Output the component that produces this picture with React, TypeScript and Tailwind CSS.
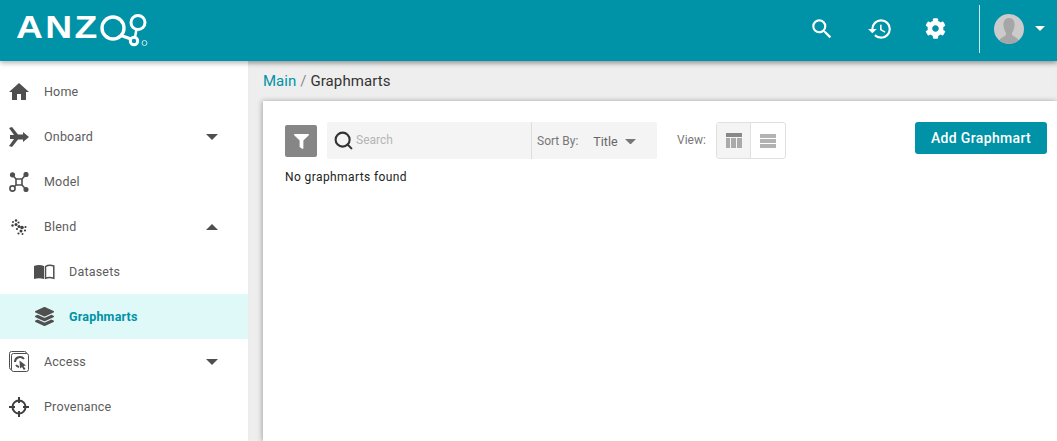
import React from 'react';
import { Search } from 'lucide-react';
import { FaCog, FaFilter, FaLayerGroup } from 'react-icons/fa';
import { MdHistory, MdHome, MdSearch } from 'react-icons/md';

const Caret = ({ up = false, width = 12, className = '' }: { up?: boolean; width?: number; className?: string }) => (
  <svg width={width} height={width / 2} viewBox="0 0 12 6" className={className}>
    <path d={up ? 'M0 6 L6 0 L12 6 Z' : 'M0 0 L12 0 L6 6 Z'} fill="currentColor" />
  </svg>
);

const OnboardIcon = () => (
  <svg width="20" height="20" viewBox="0 0 20 20" fill="#4f4f4f" className="shrink-0">
    <path d="M0 1 L3 0 L9 7.5 L14 7.5 L14 5 L20 10 L14 15 L14 12.5 L9 12.5 L3 20 L0 19 L5 12 L1 12 L1 8 L5 8 Z" />
  </svg>
);

const ModelIcon = () => (
  <svg width="20" height="20" viewBox="0 0 20 20" fill="none" stroke="#4f4f4f" strokeWidth="1.6" className="shrink-0">
    <path d="M7 7 H13 V13 H7 Z" />
    <path d="M7 7 L3.5 3 M13 7 L17 2.5 M13 13 L17 17.5 M7 13 L5 15" />
    <circle cx="3.5" cy="2.8" r="1.8" fill="#4f4f4f" />
    <circle cx="17" cy="2.5" r="1.8" fill="#4f4f4f" />
    <circle cx="17" cy="17.5" r="1.8" fill="#4f4f4f" />
    <circle cx="3.5" cy="16.5" r="2.6" />
  </svg>
);

const BlendIcon = () => (
  <svg width="16" height="16" viewBox="0 0 16 16" fill="#3f3f3f" className="shrink-0">
    <circle cx="5" cy="1.5" r="1.2" />
    <circle cx="2" cy="3" r="1" />
    <circle cx="7.5" cy="3.5" r="1.1" />
    <circle cx="1.5" cy="6.5" r="1.2" />
    <circle cx="5" cy="5.5" r="1.5" />
    <circle cx="8" cy="7.5" r="1.5" />
    <circle cx="11" cy="8.5" r="1.8" />
    <circle cx="14.5" cy="8" r="1.1" />
    <circle cx="6" cy="10" r="1.1" />
    <circle cx="10" cy="12" r="1.5" />
    <circle cx="14" cy="11.5" r="1.1" />
    <circle cx="7.5" cy="14.5" r="1.1" />
    <circle cx="11.5" cy="15" r="1" />
  </svg>
);

const BookIcon = () => (
  <svg width="21" height="16" viewBox="0 0 21 16" className="shrink-0">
    <path d="M0 2 C3 0.5 7 0.5 10 2 V15 C7 14 3 14 0 15 Z" fill="#4f4f4f" />
    <path d="M11.5 2.6 C14 1 17 1 19.8 2 V14.2 C17 13.4 14 13.4 11.5 14.2 Z" fill="#fff" stroke="#4f4f4f" strokeWidth="1.5" />
  </svg>
);

const AccessIcon = () => (
  <svg width="20" height="21" viewBox="0 0 20 21" fill="none" stroke="#4f4f4f" className="shrink-0">
    <rect x="0.5" y="0.5" width="17" height="18" rx="2" strokeWidth="1" />
    <rect x="2.5" y="2.5" width="17" height="18" rx="2" fill="#fff" strokeWidth="1" />
    <path d="M6 11 A5 5 0 0 1 15 8" strokeWidth="2" />
    <path d="M7 14 A5 5 0 0 0 10 16" strokeWidth="2" />
    <path d="M10.5 9.5 L17 14.5 L14.5 15 L16.5 18 L14.8 19 L13 16 L11 17.5 Z" fill="#4f4f4f" stroke="none" />
  </svg>
);

const ProvenanceIcon = () => (
  <svg width="20" height="20" viewBox="0 0 20 20" fill="none" stroke="#3f3f3f" strokeWidth="2" className="shrink-0">
    <circle cx="10" cy="10" r="6.5" />
    <path d="M10 0 V6 M10 14 V20 M0 10 H6 M14 10 H20" />
  </svg>
);

const NavRow = ({
  icon,
  label,
  caret,
  sub,
  active,
}: {
  icon: React.ReactNode;
  label: string;
  caret?: 'up' | 'down';
  sub?: boolean;
  active?: boolean;
}) => (
  <div className={`flex h-[45px] items-center pr-[30px] ${sub ? 'pl-[34px]' : 'pl-[9px]'} ${active ? 'bg-[#dff8f8]' : ''}`}>
    <div className="flex w-[20px] justify-center">{icon}</div>
    <span
      className={`ml-[15px] mt-[2px] text-[12.5px] tracking-[0.2px] ${active ? 'font-bold text-[#0092a6]' : 'text-[#5c5c5c]'}`}
    >
      {label}
    </span>
    {caret && <Caret up={caret === 'up'} className="ml-auto text-[#4f4f4f]" />}
  </div>
);

export default function App() {
  return (
    <div className="flex h-[441px] w-[1057px] flex-col overflow-hidden bg-white font-['Roboto',sans-serif]">
      <header className="relative z-10 flex h-[61px] shrink-0 items-center bg-[#0092a6] pl-[16px] pr-[12px] shadow-[0_2px_5px_rgba(0,0,0,0.3)]">
        <div className="flex items-center">
          <span className="mb-[6px] w-[84px] origin-left font-['Liberation_Sans',sans-serif] text-[31px] leading-none font-bold tracking-[2px] text-white [transform:scaleX(1.2)]">
            ANZ
          </span>
          <svg width="50" height="34" viewBox="0 0 50 34" className="mt-[1px]" fill="none" stroke="#fff" strokeWidth="3.4">
            <circle cx="13" cy="14" r="11" />
            <path d="M21 21.5 L31 25" />
            <path d="M36.5 15 L35 23.5" strokeWidth="2.5" />
            <circle cx="38" cy="8.5" r="7" strokeWidth="3" />
            <circle cx="34" cy="27" r="3.7" strokeWidth="3" />
            <circle cx="44.5" cy="29" r="2.5" strokeWidth="1" stroke="#cfe9ed" />
          </svg>
        </div>
        <div className="ml-auto flex items-center pb-[4px]">
          <MdSearch className="mr-[32px] text-white" size={26} />
          <MdHistory className="mr-[32px] text-white" size={26} />
          <FaCog className="mr-[33px] text-white" size={21} />
          <div className="h-[48px] w-px bg-[#cfe9ed]" />
          <div className="relative ml-[14px] h-[30px] w-[30px] overflow-hidden rounded-full bg-[#cbcbcb]">
            <svg width="30" height="30" viewBox="0 0 30 30" fill="#a6a6a6">
              <path d="M15 4 C19 4 21 7 20.5 12 C20 16 18.5 18 18 19 L18 21 L24 25 L24 30 L6 30 L6 25 L12 21 L12 19 C11.5 18 10 16 9.5 12 C9 7 11 4 15 4 Z" />
            </svg>
          </div>
          <Caret width={10} className="ml-[11px] text-white" />
        </div>
      </header>

      <div className="flex min-h-0 flex-1">
        <aside className="w-[248px] shrink-0 bg-white pt-[8px]">
          <NavRow icon={<MdHome className="shrink-0 text-[#4f4f4f]" size={24} />} label="Home" />
          <NavRow icon={<OnboardIcon />} label="Onboard" caret="down" />
          <NavRow icon={<ModelIcon />} label="Model" />
          <NavRow icon={<BlendIcon />} label="Blend" caret="up" />
          <NavRow icon={<BookIcon />} label="Datasets" sub />
          <NavRow icon={<FaLayerGroup className="shrink-0 text-[#4f4f4f]" size={19} />} label="Graphmarts" sub active />
          <NavRow icon={<AccessIcon />} label="Access" caret="down" />
          <NavRow icon={<ProvenanceIcon />} label="Provenance" />
        </aside>

        <main className="flex min-w-0 flex-1 flex-col bg-[#eeeeee] shadow-[inset_0_5px_5px_-3px_rgba(0,0,0,0.12)]">
          <div className="flex h-[40px] shrink-0 items-center pl-[15px] text-[15px] text-[#333]">
            <span className="text-[#0092a6]">Main</span>
            <span className="mx-[4px] text-[#8a8a8a]">/</span>
            <span className="tracking-[0.1px]">Graphmarts</span>
          </div>
          <section className="ml-[15px] flex-1 bg-white pl-[22px] pr-[10px] pt-[21px] shadow-[-1px_0_5px_rgba(0,0,0,0.3)]">
            <div className="flex items-start">
              <div className="mt-[3px] flex h-[32px] w-[32px] items-center justify-center rounded-[2px] bg-[#868686]">
                <FaFilter className="text-white" size={15} />
              </div>
              <div className="ml-[10px] flex h-[37px] w-[330px] items-center rounded-[2px] bg-[#f4f4f4]">
                <div className="flex h-full w-[205px] items-center border-r border-[#dddddd] pl-[6px]">
                  <Search className="shrink-0 text-[#333]" size={21} strokeWidth={2.4} />
                  <span className="mb-[2px] ml-[2px] text-[12px] text-[#b5b5b5]">Search</span>
                </div>
                <span className="ml-[5px] text-[12px] text-[#777]">Sort By:</span>
                <span className="ml-[15px] mt-[3px] text-[12.5px] text-[#666]">Title</span>
                <Caret width={11} className="ml-[7px] mt-[2px] text-[#777]" />
              </div>
              <span className="ml-[20px] mt-[9px] text-[12px] text-[#777]">View:</span>
              <div className="ml-[10px] flex h-[37px] w-[70px] overflow-hidden rounded-[3px] border border-[#e0e0e0]">
                <div className="flex flex-1 items-center justify-center border-r border-[#e0e0e0] bg-[#f4f4f4]">
                  <div className="flex w-[16px] flex-col gap-[1px]">
                    <div className="h-[4px] bg-[#888]" />
                    <div className="flex h-[10px] gap-[1px]">
                      <div className="flex-1 bg-[#aaa]" />
                      <div className="flex-1 bg-[#aaa]" />
                      <div className="flex-1 bg-[#aaa]" />
                    </div>
                  </div>
                </div>
                <div className="flex flex-1 items-center justify-center">
                  <div className="flex w-[16px] flex-col gap-[1px]">
                    <div className="h-[4px] bg-[#b3b3b3]" />
                    <div className="h-[4px] bg-[#b3b3b3]" />
                    <div className="h-[4px] bg-[#b3b3b3]" />
                  </div>
                </div>
              </div>
              <button className="ml-auto h-[32px] w-[132px] rounded-[3px] bg-[#0092a6] text-[14px] font-medium tracking-[0.35px] text-white">
                Add Graphmart
              </button>
            </div>
            <p className="mt-[9px] text-[12px] tracking-[0.4px] text-[#222]">No graphmarts found</p>
          </section>
        </main>
      </div>
    </div>
  );
}
